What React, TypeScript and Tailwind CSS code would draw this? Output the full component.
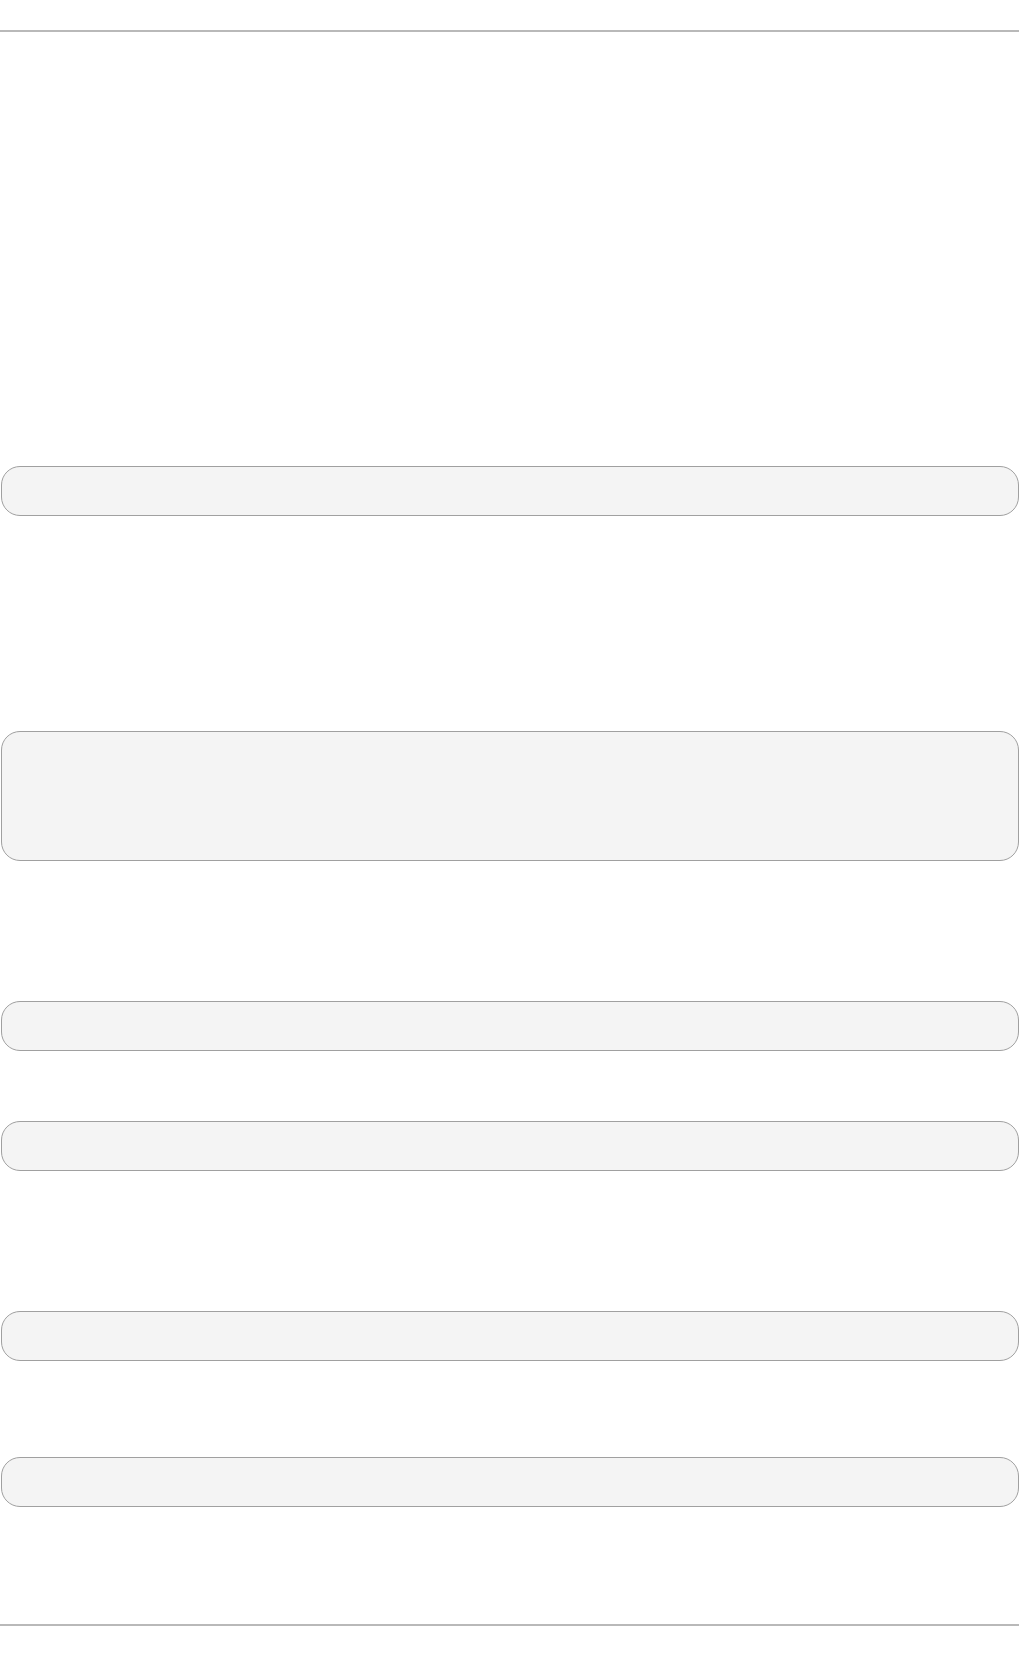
export default function App() {
  return (
    <div className="flex h-[1656px] w-[1020px] flex-col bg-white font-['Liberation_Sans',sans-serif]">
      <div className="mt-[30px] h-[2px] w-[1019px] bg-[#b9b9b9]" />

      <CodeBlock className="mt-[434px] h-[50px]" />
      <CodeBlock className="mt-[215px] h-[130px]" />
      <CodeBlock className="mt-[140px] h-[50px]" />
      <CodeBlock className="mt-[70px] h-[50px]" />
      <CodeBlock className="mt-[140px] h-[50px]" />
      <CodeBlock className="mt-[96px] h-[50px]" />

      <div className="mt-[117px] h-[2px] w-[1019px] bg-[#b9b9b9]" />
    </div>
  )
}

function CodeBlock({ className }: { className: string }) {
  return (
    <pre
      className={
        "ml-px w-[1018px] shrink-0 rounded-[19px] border border-[#a0a0a0] bg-[#f4f4f4] " +
        className
      }
    />
  )
}
